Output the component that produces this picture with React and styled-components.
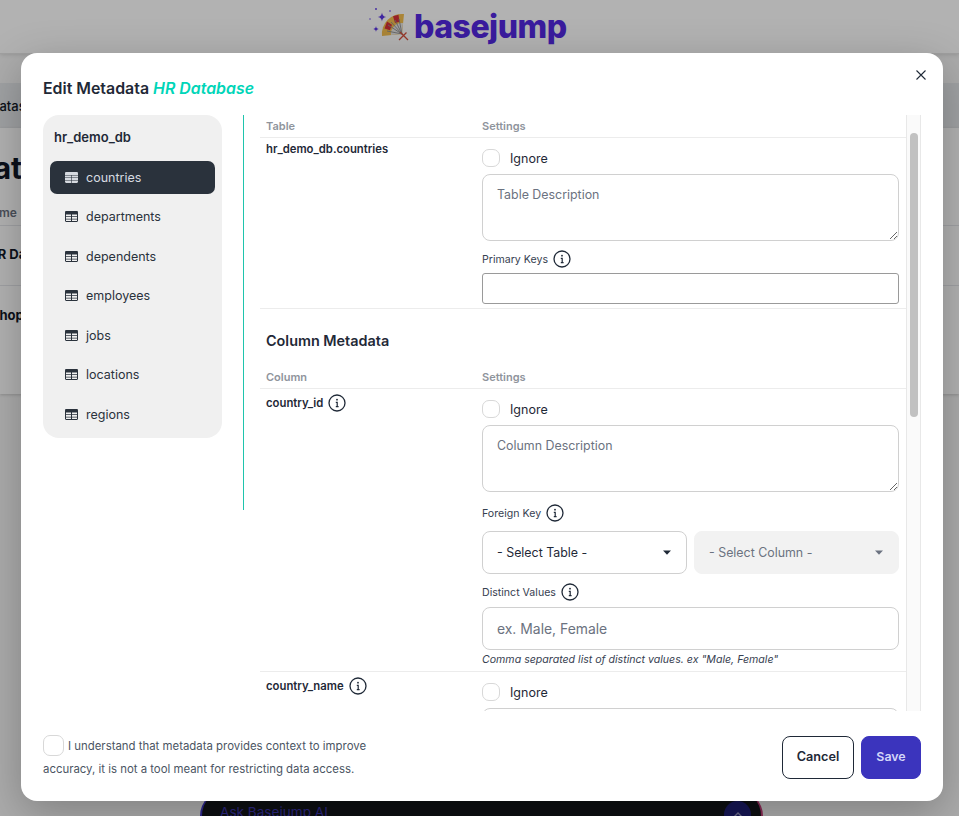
import React from "react";
import styled, { createGlobalStyle } from "styled-components";

const Global = createGlobalStyle`
  html, body { margin: 0; padding: 0; height: 100%; background: #fff; }
  body { font-family: Inter, "Liberation Sans", sans-serif; overflow: hidden; color: #1f2937; }
  * { box-sizing: border-box; }
`;

const Page = styled.div`
  position: relative;
  width: 959px;
  height: 816px;
  overflow: hidden;
  background: #f6f6f6;
`;
const TopBar = styled.header`
  height: 54px;
  background: #fff;
  border-bottom: 1px solid #e5e5e5;
  box-shadow: 0 1px 4px rgba(0, 0, 0, 0.12);
  display: flex;
  align-items: center;
  padding: 0 0 0 368px;
  gap: 3px;
`;
const Logo = styled.span`
  font-family: Inter, sans-serif;
  font-weight: 800;
  font-size: 32px;
  line-height: 40px;
  letter-spacing: -0.5px;
  color: #5329e2;
`;
const TabBand = styled.div`
  margin-top: 29px;
  height: 45px;
  background: #e6e8eb;
  display: flex;
  align-items: center;
  font-size: 13px;
  font-weight: 500;
  color: #111827;
`;
const TabText = styled.span`
  margin-left: -10px;
`;
const DataCard = styled.section`
  height: 266px;
  background: #fff;
  box-shadow: 0 1px 3px rgba(0, 0, 0, 0.18);
`;
const PageTitle = styled.h1`
  margin: 0 0 0 -28px;
  padding-top: 22px;
  height: 69px;
  font-size: 30px;
  line-height: 36px;
  font-weight: 700;
  color: #111827;
  white-space: nowrap;
`;
const BgHead = styled.div`
  height: 29px;
  border-bottom: 1px solid #e5e7eb;
  font-size: 12px;
  font-weight: 600;
  color: #6b7280;
  line-height: 32px;
  white-space: nowrap;
`;
const BgRow = styled.div`
  height: 60px;
  border-bottom: ${(p) => (p.$last ? "none" : "1px solid #e5e7eb")};
  font-size: 13px;
  font-weight: 700;
  color: #111827;
  padding-top: ${(p) => (p.$last ? 20 : 19)}px;
  line-height: 18px;
  white-space: nowrap;
`;
const BgClip = styled.span`
  display: inline-block;
  margin-left: ${(p) => p.$x}px;
`;
const AskBar = styled.div`
  position: absolute;
  left: 200px;
  top: 790px;
  width: 563px;
  height: 60px;
  background: #14161a;
  border-left: 2px solid #4338ca;
  border-right: 2px solid #c23a78;
  border-radius: 26px;
  display: flex;
  justify-content: space-between;
  padding: 12px 10px 0 18px;
  color: #3f37b8;
  font-size: 13.6px;
  line-height: 20px;
`;
const AskCircle = styled.span`
  width: 27px;
  height: 27px;
  border-radius: 50%;
  background: #20207a;
  color: #9a9ac8;
  display: flex;
  align-items: center;
  justify-content: center;
  margin-top: -1px;
`;
const Overlay = styled.div`
  position: absolute;
  inset: 0;
  background: rgba(0, 0, 0, 0.3);
`;
const Modal = styled.div`
  position: absolute;
  left: 21px;
  top: 53px;
  width: 922px;
  height: 748px;
  background: #fff;
  border-radius: 16px;
  padding: 25px 22px 22px;
  display: flex;
  flex-direction: column;
  box-shadow: 0 12px 44px rgba(0, 0, 0, 0.26);
`;
const CloseBtn = styled.button`
  position: absolute;
  top: 15px;
  right: 14px;
  width: 16px;
  height: 14px;
  padding: 0;
  border: 0;
  background: none;
  color: #1f2937;
  display: flex;
  align-items: center;
  justify-content: center;
`;
const Title = styled.h2`
  margin: 0;
  font-size: 15.9px;
  line-height: 22px;
  font-weight: 600;
  color: #1f2937;
`;
const Accent = styled.em`
  font-style: italic;
  font-weight: 600;
  color: #00d5b8;
`;
const Body = styled.div`
  margin-top: 15px;
  height: 596px;
  display: flex;
  align-items: flex-start;
`;
const Sidebar = styled.nav`
  width: 179px;
  flex: none;
  background: #f0f0f0;
  border-radius: 16px;
  padding: 14px 7px 7px;
`;
const DbName = styled.div`
  padding-left: 4px;
  font-size: 13px;
  line-height: 16px;
  font-weight: 600;
  color: #1f2937;
  margin-bottom: 16px;
`;
const TableList = styled.div`
  display: flex;
  flex-direction: column;
  gap: 6.5px;
`;
const TableItem = styled.div`
  height: 33px;
  border-radius: 7px;
  padding: 0 0 1px 15px;
  display: flex;
  align-items: center;
  gap: 8px;
  font-size: 12.5px;
  color: ${(p) => (p.$active ? "#d6dae0" : "#2a323c")};
  background: ${(p) => (p.$active ? "#2a323c" : "transparent")};
`;
const Divider = styled.div`
  flex: none;
  width: 1px;
  height: 395px;
  margin: 0 16px 0 21px;
  background: #1fc4ad;
`;
const TablePane = styled.div`
  flex: 1;
  height: 596px;
  display: flex;
  overflow: hidden;
`;
const TableCol = styled.div`
  flex: 1;
  min-width: 0;
  height: 596px;
  overflow: hidden;
`;
const Track = styled.div`
  flex: none;
  width: 15px;
  height: 596px;
  background: #fafafa;
  border-left: 1px solid #e8e8e8;
  border-right: 1px solid #e8e8e8;
  padding: 18px 2px 0 3px;
`;
const Thumb = styled.div`
  height: 284px;
  border-radius: 4px;
  background: #c1c1c1;
`;
const HeadRow = styled.div`
  height: 23px;
  border-bottom: 1px solid #ececec;
  display: grid;
  grid-template-columns: 216px 1fr;
  padding: 0 7px 0 6px;
  font-size: 11px;
  line-height: 22px;
  font-weight: 600;
  color: #8f949c;
`;
const Row = styled.div`
  display: grid;
  grid-template-columns: 216px 1fr;
  padding: 0 7px ${(p) => p.$pb}px 6px;
  border-bottom: 1px solid #ececec;
`;
const NameCell = styled.div`
  padding-top: ${(p) => (p.$icon ? 5 : 4)}px;
  font-size: 11.3px;
  line-height: 14px;
  font-weight: 600;
  color: #1f2937;
  display: flex;
  align-items: center;
  align-self: flex-start;
  gap: 5px;
`;
const Settings = styled.div`
  padding-top: 11px;
  display: flex;
  flex-direction: column;
`;
const IgnoreRow = styled.label`
  height: 18px;
  display: flex;
  align-items: center;
  gap: 10px;
  font-size: 12.5px;
  color: #1f2937;
`;
const Check = styled.span`
  flex: none;
  display: inline-block;
  width: ${(p) => p.$size || 18}px;
  height: ${(p) => p.$size || 18}px;
  border: 1px solid #d8d8d8;
  border-radius: 7px;
  background: #fff;
`;
const Area = styled.textarea`
  display: block;
  width: 100%;
  height: 67px;
  margin-top: 7px;
  padding: 12px 14px;
  border: 1px solid #d0d0d0;
  border-radius: 8px;
  font-family: inherit;
  font-size: 12.4px;
  line-height: 15px;
  outline: none;
  resize: vertical;
  &::placeholder { color: #6b7280; opacity: 1; }
`;
const FieldLabel = styled.div`
  height: 18px;
  margin-top: ${(p) => p.$mt}px;
  display: flex;
  align-items: center;
  gap: 5px;
  font-size: 10.6px;
  color: #374151;
`;
const KeysInput = styled.input`
  display: block;
  width: 100%;
  height: 31px;
  margin-top: 5px;
  border: 1px solid #9a9a9a;
  border-radius: 3px;
  outline: none;
`;
const SelectPair = styled.div`
  margin-top: 9px;
  display: grid;
  grid-template-columns: 1fr 1fr;
  gap: 7px;
`;
const SelectBox = styled.div`
  height: 43px;
  border-radius: 8px;
  padding: 0 15px 1px 14px;
  display: flex;
  align-items: center;
  justify-content: space-between;
  font-size: 12.4px;
  border: 1px solid ${(p) => (p.$disabled ? "#f2f2f2" : "#d0d0d0")};
  background: ${(p) => (p.$disabled ? "#f2f2f2" : "#fff")};
  color: ${(p) => (p.$disabled ? "#6b7280" : "#1f2937")};
`;
const ValuesInput = styled.input`
  display: block;
  width: 100%;
  height: 43px;
  margin-top: 6px;
  padding: 0 14px;
  border: 1px solid #d0d0d0;
  border-radius: 8px;
  font-family: inherit;
  font-size: 13.9px;
  outline: none;
  &::placeholder { color: #6b7280; opacity: 1; }
`;
const Helper = styled.div`
  margin-top: 2px;
  font-size: 10.6px;
  line-height: 16px;
  font-style: italic;
  color: #374151;
  white-space: nowrap;
`;
const SectionTitle = styled.h3`
  margin: 0;
  padding: 22px 6px 15px;
  font-size: 14.4px;
  line-height: 20px;
  font-weight: 600;
  color: #1f2937;
`;
const Footer = styled.footer`
  margin-top: 25px;
  height: 43px;
  display: flex;
  align-items: center;
  justify-content: space-between;
`;
const Consent = styled.p`
  margin: 0;
  width: 340px;
  flex: none;
  font-size: 11.4px;
  line-height: 23px;
  color: #4b5563;
`;
const ConsentCheck = styled(Check)`
  vertical-align: middle;
  margin: -2px 4px 0 0;
`;
const Actions = styled.div`
  display: flex;
  gap: 7px;
`;
const Button = styled.button`
  height: 43px;
  width: ${(p) => p.$w}px;
  padding: 0 0 2px;
  border-radius: 8px;
  font-family: inherit;
  font-size: ${(p) => (p.$primary ? 12.4 : 12.7)}px;
  font-weight: 600;
  border: 1px solid ${(p) => (p.$primary ? "#3b34bd" : "#1f2937")};
  background: ${(p) => (p.$primary ? "#3b34bd" : "#fff")};
  color: ${(p) => (p.$primary ? "#d3d6f8" : "#1f2937")};
`;

const TableIcon = () => (
  <svg width="13" height="11" viewBox="0 0 13 11" fill="currentColor" style={{ flex: "none" }}>
    <path d="M1.2 0h10.6c.66 0 1.2.54 1.2 1.2v8.6c0 .66-.54 1.2-1.2 1.2H1.2C.54 11 0 10.46 0 9.8V1.2C0 .54.54 0 1.2 0Z" />
    <path fill="#f0f0f0" d="M1 3.4h5v1.8H1zM7 3.4h5v1.8H7zM1 6.1h5v1.6H1zM7 6.1h5v1.6H7zM1 8.5h5v1.5H1zM7 8.5h5v1.5H7z" />
  </svg>
);
const ActiveTableIcon = () => (
  <svg width="13" height="11" viewBox="0 0 13 11" fill="#d6dae0" style={{ flex: "none" }}>
    <path d="M1.2 0h10.6c.66 0 1.2.54 1.2 1.2v8.6c0 .66-.54 1.2-1.2 1.2H1.2C.54 11 0 10.46 0 9.8V1.2C0 .54.54 0 1.2 0Z" />
    <path fill="#2a323c" d="M0 3h13v.5H0zM6.2 3h.6v8h-.6zM0 5.6h13v.5H0zM0 8.2h13v.5H0z" />
  </svg>
);
const Info = () => (
  <svg width="18" height="18" viewBox="0 0 18 18" fill="none" stroke="#1f2937" style={{ flex: "none" }}>
    <circle cx="9" cy="9" r="8" strokeWidth="1.3" />
    <path d="M7.8 8.3H9.2V12.6M7.8 12.6h2.8" strokeWidth="1.2" />
    <circle cx="9" cy="5.7" r="0.9" fill="#1f2937" stroke="none" />
  </svg>
);
const Caret = ({ color }) => (
  <svg width="8" height="5" viewBox="0 0 8 5" fill={color}>
    <path d="M0 .5h8L4 4.8Z" />
  </svg>
);
const Fan = () => (
  <svg width="43" height="38" viewBox="0 0 43 38" style={{ flex: "none", marginTop: -5 }}>
    <g fill="#5a35e6">
      <path d="M14 7.500c.5 3 1.300 3.800 4.200 4.500-2.900.7-3.700 1.500-4.200 4.500-.5-3-1.300-3.800-4.200-4.500 2.900-.7 3.700-1.500 4.200-4.500Z" />
      <path d="M8 21c.3 1.900.8 2.400 2.700 3-1.900.6-2.400 1.100-2.700 3-.3-1.900-.8-2.400-2.700-3 1.900-.6 2.400-1.100 2.700-3Z" />
      <circle cx="8" cy="4" r=".9" />
      <circle cx="22" cy="6" r=".8" />
      <circle cx="2" cy="14" r=".7" />
    </g>
    <path d="M34 29L14 31A20 20 0 0 1 36 9Z" fill="#f4bf4f" />
    <path d="M34 29L23 30A11 11 0 0 1 35 18Z" fill="#e6e6e6" />
    <path d="M16.500 23.500l5.500 1.800 2-5.500-5-3.200ZM25 11.200l5.500-1.400 1 7-4.500 1.200Z" fill="#d8323c" />
    <path d="M34 29L20 20M34 29L23 17M34 29L27 15M34 29L31 14M34 29L19 26" stroke="#8d8d8d" strokeWidth=".9" fill="none" />
    <path d="M32 27l8 8M38.500 27.500l-7.500 7.500" stroke="#d8503c" strokeWidth="1.300" />
  </svg>
);

const tables = ["countries", "departments", "dependents", "employees", "jobs", "locations", "regions"];

export default function App() {
  return (
    <Page>
      <Global />
      <TopBar>
        <Fan />
        <Logo>basejump</Logo>
      </TopBar>
      <TabBand>
        <TabText>Datasets</TabText>
      </TabBand>
      <DataCard>
        <PageTitle>Data</PageTitle>
        <BgHead><BgClip $x={-17}>Name</BgClip></BgHead>
        <BgRow><BgClip $x={-12}>HR Database</BgClip></BgRow>
        <BgRow $last><BgClip $x={-9}>Shop</BgClip></BgRow>
      </DataCard>
      <AskBar>
        <span>Ask Basejump AI</span>
        <AskCircle>
          <svg width="10" height="6" viewBox="0 0 10 6" fill="none" stroke="currentColor" strokeWidth="1.400"><path d="M1 5l4-4 4 4" /></svg>
        </AskCircle>
      </AskBar>
      <Overlay />
      <Modal>
        <CloseBtn aria-label="Close">
          <svg width="10" height="10" viewBox="0 0 10 10" fill="none" stroke="currentColor" strokeWidth="1.100"><path d="M.5.5l9 9M9.500.5l-9 9" /></svg>
        </CloseBtn>
        <Title>Edit Metadata <Accent>HR Database</Accent></Title>
        <Body>
          <Sidebar>
            <DbName>hr_demo_db</DbName>
            <TableList>
              {tables.map((t, i) => (
                <TableItem key={t} $active={i === 0}>
                  {i === 0 ? <ActiveTableIcon /> : <TableIcon />}
                  {t}
                </TableItem>
              ))}
            </TableList>
          </Sidebar>
          <Divider />
          <TablePane>
            <TableCol>
              <HeadRow><span>Table</span><span>Settings</span></HeadRow>
              <Row $pb={4}>
                <NameCell>hr_demo_db.countries</NameCell>
                <Settings>
                  <IgnoreRow><Check />Ignore</IgnoreRow>
                  <Area placeholder="Table Description" />
                  <FieldLabel $mt={9}>Primary Keys <Info /></FieldLabel>
                  <KeysInput />
                </Settings>
              </Row>
              <SectionTitle>Column Metadata</SectionTitle>
              <HeadRow><span>Column</span><span>Settings</span></HeadRow>
              <Row $pb={3}>
                <NameCell $icon>country_id <Info /></NameCell>
                <Settings>
                  <IgnoreRow><Check />Ignore</IgnoreRow>
                  <Area placeholder="Column Description" />
                  <FieldLabel $mt={12}>Foreign Key <Info /></FieldLabel>
                  <SelectPair>
                    <SelectBox>- Select Table - <Caret color="#1f2937" /></SelectBox>
                    <SelectBox $disabled>- Select Column - <Caret color="#6b7280" /></SelectBox>
                  </SelectPair>
                  <FieldLabel $mt={9}>Distinct Values <Info /></FieldLabel>
                  <ValuesInput placeholder="ex. Male, Female" />
                  <Helper>Comma separated list of distinct values. ex "Male, Female"</Helper>
                </Settings>
              </Row>
              <Row $pb={3}>
                <NameCell $icon>country_name <Info /></NameCell>
                <Settings>
                  <IgnoreRow><Check />Ignore</IgnoreRow>
                  <Area placeholder="Column Description" />
                </Settings>
              </Row>
            </TableCol>
            <Track><Thumb /></Track>
          </TablePane>
        </Body>
        <Footer>
          <Consent>
            <ConsentCheck $size={21} />I understand that metadata provides context to improve accuracy, it is not a tool meant for restricting data access.
          </Consent>
          <Actions>
            <Button $w={72}>Cancel</Button>
            <Button $w={60} $primary>Save</Button>
          </Actions>
        </Footer>
      </Modal>
    </Page>
  );
}
